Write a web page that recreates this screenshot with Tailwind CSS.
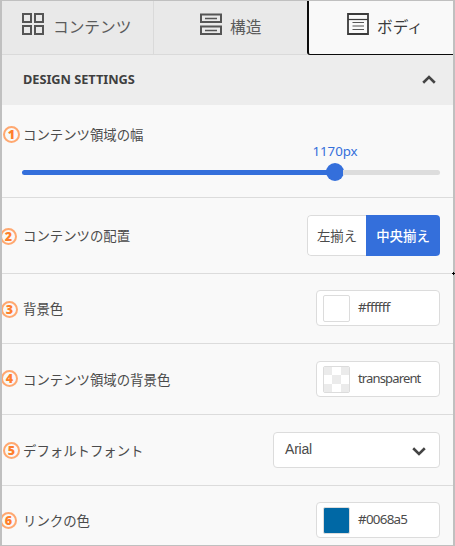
<!DOCTYPE html>
<html lang="ja">
<head>
<meta charset="utf-8">
<title>Design Settings</title>
<script src="https://cdn.jsdelivr.net/npm/@tailwindcss/browser@4"></script>
</head>
<body class="relative h-[546px] w-[455px] overflow-hidden font-['Noto_Sans','Noto_Sans_CJK_JP',sans-serif] text-[13.4px] text-[#4b4b4b]">
<div class="relative flex h-[546px] w-[455px] flex-col overflow-hidden border-x-2 border-y border-[#c0c0c0] bg-[#f9f9f9]">
  <nav class="flex h-[54px] shrink-0 bg-[#e9e9e9] text-[15.7px] leading-[20px] text-[#5b5b5b]">
    <div class="flex w-[152px] border-r border-b border-[#dadada] pt-3 pl-5">
      <svg class="h-[22px] w-[22px] shrink-0" viewBox="0 0 22 22" fill="none" stroke="#555" stroke-width="2"><path d="M1 1h8v8H1zM13 1h8v8h-8zM1 13h8v8H1zM13 13h8v8h-8z"/></svg>
      <span class="mt-1 ml-[9px] whitespace-nowrap">コンテンツ</span>
    </div>
    <div class="flex w-[153px] border-b border-[#dadada] pt-3 pl-[46px]">
      <svg class="h-[22px] w-[22px] shrink-0" viewBox="0 0 22 22" fill="none" stroke="#555"><path stroke-width="2" d="M1 1.500h20v7.500H1zM1 13.500h20v7.500H1z"/><path stroke-width="1.300" d="M5 5.500h12M5 17.500h12"/></svg>
      <span class="mt-1 ml-[8px] whitespace-nowrap">構造</span>
    </div>
    <div class="flex grow rounded-bl-[3px] border-b border-l-2 border-[#0c0c0c] bg-[#f9f9f9] pt-3 pl-[38px] text-[#3b3b3b]">
      <svg class="h-[22px] w-[22px] shrink-0" viewBox="0 0 22 22" fill="none" stroke="#3b3b3b"><path stroke-width="1.800" d="M1 1h20v20H1z"/><path stroke-width="1.200" d="M1 6.500h20"/><path stroke-width="1.200" stroke="#555" d="M5.500 9.500h11.500M5.500 13h11.500M5.500 16.500h11.500"/></svg>
      <span class="mt-1 ml-[8px] whitespace-nowrap">ボディ</span>
    </div>
  </nav>
  <header class="flex h-[50px] shrink-0 items-center justify-between bg-[#ededed] pr-[17px] pl-[21px]">
    <h1 class="text-[12.8px] font-bold tracking-[-0.05px] text-[#3f3f3f]">DESIGN SETTINGS</h1>
    <svg class="mb-[2px] h-[9px] w-[14px]" viewBox="0 0 14 9" fill="none" stroke="#444" stroke-width="2.600"><path d="M1.200 7.700L7 2l5.800 5.700"/></svg>
  </header>
  <section class="flex h-[93px] shrink-0 flex-col border-b border-[#dcdcdc] pt-5 pr-[13px] pl-5">
    <span class="ml-px h-5 leading-5">コンテンツ領域の幅</span>
    <div class="mt-[-4px] h-5 w-[60px] translate-x-[283px] text-center text-[13.3px] leading-5 tracking-[-0.1px] text-[#346fdb]">1170px</div>
    <div class="mt-[2px] flex h-[18px] w-[418px] items-center">
      <div class="h-[5px] w-[305px] rounded-l-full bg-[#346fdb]"></div>
      <div class="-ml-px h-[18px] w-[18px] rounded-full bg-[#346fdb]"></div>
      <div class="-ml-px h-[5px] grow rounded-r-full bg-[#dddddd]"></div>
    </div>
  </section>
  <section class="flex h-[76px] shrink-0 items-center justify-between border-b border-[#dcdcdc] pr-[13px] pl-[21px]">
    <span class="mt-[2px]">コンテンツの配置</span>
    <div class="flex h-[41px] w-[133px] overflow-hidden rounded-[4px]">
      <div class="flex w-[59px] items-center justify-center rounded-l-[4px] border border-r-0 border-[#dcdcdc] bg-white pt-px">左揃え</div>
      <div class="flex w-[74px] items-center justify-center bg-[#346fdb] pt-px font-medium text-white">中央揃え</div>
    </div>
  </section>
  <section class="flex h-[70px] shrink-0 items-start justify-between border-b border-[#dcdcdc] pt-4 pr-[13px] pl-[21px]">
    <span class="mt-[9px] leading-5">背景色</span>
    <div class="flex h-9 w-[124px] items-start rounded-[4px] border border-[#dcdcdc] bg-white pt-1 pl-1.5">
      <div class="h-[27px] w-[27px] rounded-[2px] border border-[#dcdcdc]"></div>
      <span class="mt-[2px] ml-2 leading-5 tracking-[-0.65px]">#ffffff</span>
    </div>
  </section>
  <section class="flex h-[71px] shrink-0 items-center justify-between border-b border-[#dcdcdc] pr-[13px] pl-[21px]">
    <span class="mt-[2px]">コンテンツ領域の背景色</span>
    <div class="flex h-9 w-[124px] items-start rounded-[4px] border border-[#dcdcdc] bg-white pt-1 pl-1.5">
      <div class="grid h-[27px] w-[27px] grid-cols-3 overflow-hidden rounded-[2px] border border-[#dcdcdc]">
        <i class="bg-[#ebebeb]"></i><i></i><i class="bg-[#ebebeb]"></i><i></i><i class="bg-[#ebebeb]"></i><i></i><i class="bg-[#ebebeb]"></i><i></i><i class="bg-[#ebebeb]"></i>
      </div>
      <span class="mt-[2px] ml-2 text-[13px] leading-5 tracking-[-0.85px]">transparent</span>
    </div>
  </section>
  <section class="flex h-[71px] shrink-0 items-center justify-between border-b border-[#dcdcdc] pr-[13px] pl-[21px]">
    <span class="mt-[2px]">デフォルトフォント</span>
    <div class="flex h-9 w-[167px] items-start justify-between rounded-[4px] border border-[#dcdcdc] bg-white pt-[6px] pr-[13px] pl-[11px] font-['Liberation_Sans',sans-serif] text-[14px]">
      <span class="leading-5 tracking-[-0.2px]">Arial</span>
      <svg class="mt-[8px] h-[9px] w-[14px]" viewBox="0 0 14 9" fill="none" stroke="#444" stroke-width="2.600"><path d="M1.200 1.300L7 7l5.800-5.700"/></svg>
    </div>
  </section>
  <section class="flex h-[59px] shrink-0 items-start justify-between pt-4 pr-[13px] pl-[21px]">
    <span class="mt-[9px] leading-5">リンクの色</span>
    <div class="flex h-9 w-[124px] items-start rounded-[4px] border border-[#dcdcdc] bg-white pt-1 pl-1.5">
      <div class="h-[27px] w-[27px] rounded-[2px] border border-[#dcdcdc] bg-[#0068a5]"></div>
      <span class="mt-[2px] ml-2 leading-5 tracking-[-0.75px]">#0068a5</span>
    </div>
  </section>
  <!-- Numbered callouts laid over the settings rows -->
  <div class="absolute inset-0 text-[12.5px] leading-[13px] font-bold text-[#ff7f2b]">
    <b class="absolute top-[125px] left-[1px] h-[17px] w-[17px] rounded-full border-2 border-[#ffa870] text-center">1</b>
    <b class="absolute top-[227px] left-[-2px] h-[17px] w-[17px] rounded-full border-2 border-[#ffa870] text-center">2</b>
    <b class="absolute top-[300px] left-[-1px] h-[17px] w-[17px] rounded-full border-2 border-[#ffa870] text-center">3</b>
    <b class="absolute top-[369px] left-[-1px] h-[17px] w-[17px] rounded-full border-2 border-[#ffa870] text-center">4</b>
    <b class="absolute top-[441px] left-[1px] h-[17px] w-[17px] rounded-full border-2 border-[#ffa870] text-center">5</b>
    <b class="absolute top-[511px] left-[-2px] h-[17px] w-[17px] rounded-full border-2 border-[#ffa870] text-center">6</b>
  </div>
</div>
<!-- Edge handle over the frame -->
<svg class="absolute top-[272px] left-[452px] h-[3px] w-[3px]" viewBox="0 0 3 3"><path fill="#000" d="M1 0h1v1h1v1H2v1H1V2H0V1h1z"/></svg>
</body>
</html>
